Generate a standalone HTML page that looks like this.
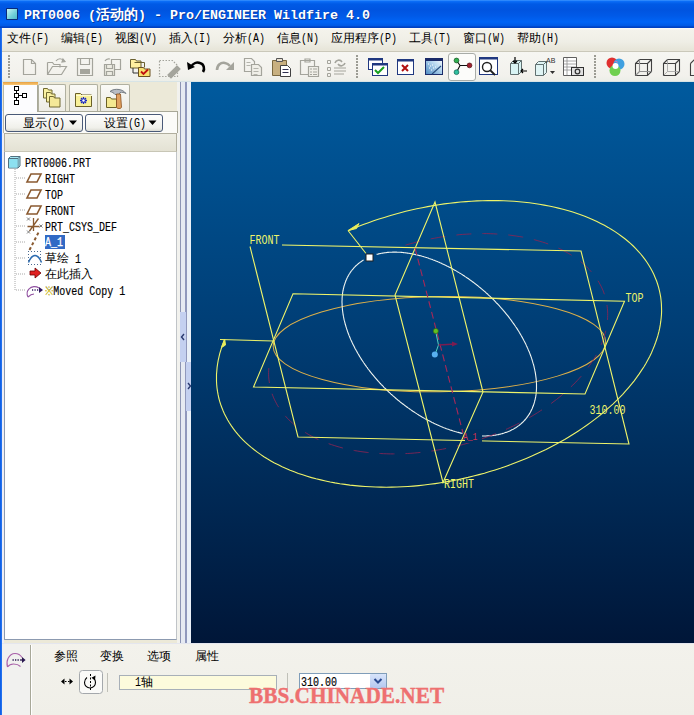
<!DOCTYPE html>
<html><head><meta charset="utf-8">
<style>
*{margin:0;padding:0;box-sizing:border-box}
html,body{width:694px;height:715px;overflow:hidden;background:#ece9d8;font-family:"Liberation Sans",sans-serif;font-size:12px;color:#000}
.a{position:absolute}
.t{position:absolute;white-space:nowrap;line-height:1}
.m{font-family:"Liberation Mono",monospace}
.mi{display:inline-block;font-size:12px;transform:scaleX(.8333);transform-origin:0 0;width:18px}
.tr{font-family:"Liberation Mono",monospace;font-size:12px;transform:scaleX(.8333);transform-origin:0 0;-webkit-text-stroke:.15px #000}
#title{left:0;top:0;width:694px;height:28px;background:linear-gradient(#3d95ff 0px,#0a6cf6 1.5px,#005ae6 4px,#0054e0 10px,#005ae8 16px,#0064f6 22px,#005ae6 25.5px,#0042c4 27px,#0040c0 28px)}
#lborder{left:0;top:28px;width:2px;height:687px;background:linear-gradient(90deg,#0858e0,#2a78f4)}
#menubar{left:2px;top:28px;width:692px;height:24px;background:linear-gradient(#fdfdfb,#f4f3ec 2px,#efeee6 60%,#e8e6da 92%);border-bottom:1px solid #cac8ba}
#toolbar{left:2px;top:52px;width:692px;height:30px;background:linear-gradient(#f6f6f2,#f2f1ec 80%,#eceee8 96%,#c8dce4)}
.menu{top:32px;font-size:12px;letter-spacing:0}
#panel{left:3px;top:82px;width:176px;height:561px;background:#ece9d8}
#viewport{left:191px;top:82px;width:503px;height:561px;background:linear-gradient(#005a9e,#003d74 45%,#001638)}
#dash{left:2px;top:643px;width:692px;height:72px;background:linear-gradient(#f3f2ec,#f0efe8)}
.tab{top:84px;height:27px;background:linear-gradient(#fafaf6,#ecebe4);border:1px solid #b0b0a0;border-bottom:none;border-radius:2px 2px 0 0}
.btn{top:114px;height:18px;background:linear-gradient(#fefefe,#f0f0ea 80%,#dcdcd4);border:1px solid #4a5a78;border-radius:3px}
</style></head><body>
<!-- title -->
<div id="title" class="a">
  <div class="a" style="left:6px;top:8px;width:12px;height:12px;background:#0a2a78;border-radius:1px"></div>
  <div class="a" style="left:7px;top:9px;width:10px;height:10px;background:linear-gradient(135deg,#c8f4f4,#70d0d8 60%,#50b8c8)"></div>
  <div class="t m" style="left:24px;top:7px;font-weight:bold;font-size:13.33px;color:#fff;text-shadow:1px 1px 0 #0a3aa0">PRT0006 (<span style="font-family:'Liberation Sans';font-size:14px;letter-spacing:0">活动的</span>) - Pro/ENGINEER Wildfire 4.0</div>
</div>
<div id="lborder" class="a"></div>
<!-- menu -->
<div id="menubar" class="a"></div>
<div id="toolbar" class="a"></div>
<div class="t menu" style="left:7px">文件<span class="m mi">(F)</span></div>
<div class="t menu" style="left:61px">编辑<span class="m mi">(E)</span></div>
<div class="t menu" style="left:115px">视图<span class="m mi">(V)</span></div>
<div class="t menu" style="left:169px">插入<span class="m mi">(I)</span></div>
<div class="t menu" style="left:223px">分析<span class="m mi">(A)</span></div>
<div class="t menu" style="left:277px">信息<span class="m mi">(N)</span></div>
<div class="t menu" style="left:331px">应用程序<span class="m mi">(P)</span></div>
<div class="t menu" style="left:409px">工具<span class="m mi">(T)</span></div>
<div class="t menu" style="left:463px">窗口<span class="m mi">(W)</span></div>
<div class="t menu" style="left:517px">帮助<span class="m mi">(H)</span></div>
<svg class="a" style="left:0;top:0" width="694" height="82" viewBox="0 0 694 82" shape-rendering="crispEdges">
<g fill="#9c9c94">
<rect x="8" y="55" width="2" height="2"/><rect x="8" y="58" width="2" height="2"/><rect x="8" y="61" width="2" height="2"/><rect x="8" y="64" width="2" height="2"/><rect x="8" y="67" width="2" height="2"/><rect x="8" y="70" width="2" height="2"/><rect x="8" y="73" width="2" height="2"/><rect x="8" y="76" width="2" height="2"/>
<rect x="356" y="55" width="2" height="2"/><rect x="356" y="58" width="2" height="2"/><rect x="356" y="61" width="2" height="2"/><rect x="356" y="64" width="2" height="2"/><rect x="356" y="67" width="2" height="2"/><rect x="356" y="70" width="2" height="2"/><rect x="356" y="73" width="2" height="2"/><rect x="356" y="76" width="2" height="2"/>
<rect x="594" y="55" width="2" height="2"/><rect x="594" y="58" width="2" height="2"/><rect x="594" y="61" width="2" height="2"/><rect x="594" y="64" width="2" height="2"/><rect x="594" y="67" width="2" height="2"/><rect x="594" y="70" width="2" height="2"/><rect x="594" y="73" width="2" height="2"/><rect x="594" y="76" width="2" height="2"/>
</g>
</svg>
<svg class="a" style="left:0;top:0" width="694" height="82" viewBox="0 0 694 82">
<g fill="none" stroke="#a4a49c" stroke-width="1.2">
 <!-- new -->
 <path d="M23.5 59.5h8l4 4v11h-12z"/><path d="M31.5 59.5v4h4"/>
 <!-- open -->
 <path d="M47.5 62.5h5l1.5 2h6v3M47.5 62.5v12h14l5-8h-14l-5 8"/><path d="M56 61c2-3 6-3 8 0" /><path d="M63 59l2 2.5-3 .5z" fill="#a4a49c"/>
 <!-- save -->
 <path d="M77.5 58.5h15v17h-15z"/><path d="M80.5 58.5v6h9v-6"/>
 <!-- saveas -->
 <path d="M111.5 59.5h9v10h-9z"/><path d="M104.5 64.5h10v11h-10z" fill="#ecebe2"/><path d="M106.5 64.5v4h6v-4M106.5 75.5v-4h6v4"/><path d="M105 61c1-2 3-2.5 5-2"/>
 <!-- dashed rect -->
 <path d="M159.5 60.5h13l5 5v11h-18z" stroke-dasharray="1.5 1.5"/><path d="M168 75l9-9 3 3-9 9z" fill="#a4a49c"/>
 <!-- redo -->
 <path d="M217 70c0-5 4-8 8-7 3 .5 5 3 5 3" stroke-width="2.6"/><path d="M234 62v8h-8z" fill="#a4a49c" stroke="none"/>
 <!-- copy -->
 <path d="M244.5 58.5h7l3 3v10h-10z"/><path d="M251.5 64.5h7l3 3v8h-10z" fill="#f0efe8"/><path d="M246.5 62.5h4M246.5 65.5h4M253.5 68.5h5M253.5 71.5h5M253.5 74.5h4" stroke-width=".8"/>
 <!-- paste special -->
 <path d="M300.5 60.5h14v14h-14z"/><path d="M305 59h5v3h-5z"/><path d="M308.5 66.5h10v10h-10z" fill="#f0efe8"/><path d="M310 69h2M313 69h4M310 72h2M313 72h4M310 74.5h2M313 74.5h4" stroke-width="1"/>
 <!-- regen -->
 <path d="M327.5 60.5h3v3h-3zM327.5 67.5h3v3h-3zM327.5 73.5h3v3h-3z" stroke-width="1"/><path d="M334 68h12M334 71h12M334 74h10" stroke-width="1"/><path d="M335 63c1-3 5-4 7-1M345 63c-1 3-5 4-7 1" stroke-width="1.6"/>
</g>
<g fill="#a4a49c"><rect x="80" y="69" width="10" height="5"/></g>
<!-- folders with check -->
<path d="M130.5 59.5h5l1 1.5h4.5v7h-10.5z" fill="#fff0a0" stroke="#6a6030"/><path d="M134.5 62.5h10v5" fill="none" stroke="#6a6030"/>
<path d="M138.5 67.5h5l1 1.5h5.5v7.5h-11.5z" fill="#f8e070" stroke="#6a5020"/><path d="M141 71.5l2.5 2.5 4.5-4.5" fill="none" stroke="#c01010" stroke-width="1.8"/>
<path d="M133 68v5h5" fill="none" stroke="#333"/>
<!-- undo -->
<path d="M191 67c2-4 6-5 9-4 4 1 5 6 3 9" fill="none" stroke="#000" stroke-width="2.6"/><path d="M187 62l1 8 7-3z" fill="#000"/>
<!-- paste -->
<path d="M272.5 60.5h14v15h-14z" fill="#c8b080" stroke="#7a6840"/><path d="M276.5 58.5h6v3h-6z" fill="#e8e0d0" stroke="#555"/><path d="M280.5 65.5h7l3 3v8h-10z" fill="#fff" stroke="#404040"/><path d="M282.5 69.5h6M282.5 72.5h6" stroke="#303050" stroke-width="1"/>
<!-- windows check -->
<rect x="368.5" y="58.5" width="14" height="11" fill="#fff" stroke="#203880"/><rect x="368" y="58" width="15" height="2.5" fill="#203880"/>
<rect x="372.5" y="63.5" width="15" height="12" fill="#fff" stroke="#203880"/><rect x="372" y="63" width="16" height="2.5" fill="#203880"/><path d="M375 70l3 3 6-6" fill="none" stroke="#18a020" stroke-width="2"/>
<!-- x window -->
<rect x="397.5" y="59.5" width="16" height="15" fill="#fff" stroke="#203880"/><rect x="397" y="59" width="17" height="2.5" fill="#203880"/><path d="M402 65l6 6M408 65l-6 6" stroke="#b01010" stroke-width="2"/>
<!-- window gradient -->
<defs><linearGradient id="wg" x1="0" y1="1" x2="1" y2="0"><stop offset="0" stop-color="#4a88c0"/><stop offset=".6" stop-color="#b8d8f0"/><stop offset="1" stop-color="#ffffff"/></linearGradient></defs>
<rect x="425.5" y="58.5" width="17" height="16" fill="url(#wg)" stroke="#1a2a68"/><rect x="425" y="58" width="18" height="3" fill="#1a2a68"/><path d="M428 64h1M430 66h1M429 68h1M432 65h1M433 68h1M431 70h1M435 67h1" stroke="#ffffff" stroke-width="1"/><path d="M432 74l9-8" stroke="#2a5080" stroke-width="1.2"/>
<!-- pressed button -->
<rect x="448.5" y="53.5" width="27" height="27" rx="2.5" fill="#fcfcfa" stroke="#a8aca8"/>
<path d="M456.5 60.5l3.5 5-3.5 6.7M460 65.5h9.5" fill="none" stroke="#101010" stroke-width="1.1"/><circle cx="456.5" cy="60.5" r="2.4" fill="#30b050" stroke="#105020" stroke-width=".7"/><circle cx="456.5" cy="72.2" r="2.4" fill="#30c0a0" stroke="#106050" stroke-width=".7"/><circle cx="469.5" cy="65.4" r="2.4" fill="#a02030" stroke="#501010" stroke-width=".7"/>
<!-- zoom window -->
<rect x="479.5" y="57.5" width="18" height="17" fill="#fff" stroke="#203880"/><rect x="479" y="57" width="19" height="2.5" fill="#203880"/><circle cx="487" cy="67" r="4.5" fill="none" stroke="#202020" stroke-width="1.4"/><path d="M490 70l5 5" stroke="#202020" stroke-width="1.8"/>
<!-- cube arrows -->
<path d="M510.5 63.5l3-3h8v11l-3 3h-8z" fill="#d8f4f4" stroke="#607070"/><path d="M510.5 63.5h8v11M518.5 63.5l3-3" fill="none" stroke="#607070"/><path d="M515 57v6M513 61l2 2 2-2M527 71h-6M523 69l-2 2 2 2" stroke="#000" stroke-width="1.2" fill="none"/>
<!-- AB cube -->
<path d="M535.5 64.5l3-3h8v11l-3 3h-8z" fill="#e0f4f4" stroke="#607070"/><path d="M535.5 64.5h8v11M543.5 64.5l3-3" fill="none" stroke="#607070"/><text x="546" y="63" font-family="Liberation Sans" font-size="7" fill="#303030">AB</text><path d="M550 71h5l-2.5 3z" fill="#303030"/>
<!-- table camera -->
<path d="M563.5 57.5h13v18h-13z" fill="#fff" stroke="#606060"/><path d="M564 61h12M564 64h12M564 67h12M564 70h12M567 58v17" stroke="#909090" stroke-width=".8"/><rect x="571.5" y="67.5" width="12" height="8" fill="#e0e0e0" stroke="#303030"/><circle cx="577.5" cy="71.5" r="2.3" fill="none" stroke="#303030" stroke-width="1.2"/>
<!-- color wheel -->
<circle cx="612" cy="63" r="5.5" fill="#e03030"/><circle cx="619" cy="64" r="5.5" fill="#40a0e0"/><circle cx="615" cy="70.5" r="5.5" fill="#70d050"/><circle cx="615.5" cy="66" r="3" fill="#fff"/><path d="M614 61l3 0 1 2z" fill="#c080c0"/>
<!-- cubes -->
<g fill="none" stroke="#404040" stroke-width="1.1"><path d="M635.5 63.5l4-4h12v12l-4 4h-12zM635.5 63.5h12v12M647.5 63.5l4-4"/><path d="M639.5 59.5v12h12M639.5 71.5l-4 4" stroke="#909090"/>
<path d="M663.5 63.5l4-4h12v12l-4 4h-12zM663.5 63.5h12v12M675.5 63.5l4-4"/><path d="M667.5 59.5v12h12M667.5 71.5l-4 4" stroke="#a0a0a0" stroke-width=".8"/>
<path d="M690.5 63.5l4-4h4M690.5 63.5v12h4"/></g>
</svg>
<div id="panel" class="a"></div>
<div class="a" style="left:2px;top:111px;width:2px;height:532px;background:#eeeef6"></div>
<!-- splitter -->
<div class="a" style="left:177px;top:82px;width:14px;height:561px;background:#f2f2ee"></div>
<div class="a" style="left:180px;top:82px;width:1px;height:561px;background:#8c94b4"></div>
<div class="a" style="left:181px;top:82px;width:4px;height:561px;background:#e6eaf2"></div>
<div class="a" style="left:185px;top:82px;width:2px;height:561px;background:#9098bc"></div>
<div class="a" style="left:187px;top:82px;width:4px;height:561px;background:#eaf0f8"></div>
<div class="a" style="left:180px;top:312px;width:6px;height:50px;background:#c4d0f0"></div>
<div class="a" style="left:186px;top:362px;width:6px;height:49px;background:#c4d0f0"></div>
<svg class="a" style="left:178px;top:330px" width="16" height="64"><path d="M6 4l-2.5 3 2.5 3M10 53l2.5 3-2.5 3" fill="none" stroke="#2a3a70" stroke-width="1.4"/></svg>
<!-- tabs -->
<div class="a" style="left:3px;top:111px;width:175px;height:1px;background:#a8a898"></div>
<div class="a" style="left:3px;top:82px;width:35px;height:30px;background:#fcfcfe;border-left:1px solid #b8b8a8;border-right:1px solid #a8a898"></div>
<div class="a" style="left:3px;top:82px;width:35px;height:3px;background:linear-gradient(#e8a040,#f8c878)"></div>
<div class="a tab" style="left:38px;width:28px"></div>
<div class="a tab" style="left:69px;width:29px"></div>
<div class="a tab" style="left:100px;width:30px"></div>
<svg class="a" style="left:0;top:82px" width="140" height="30">
 <g fill="#fff" stroke="#000" stroke-width="1.1" shape-rendering="crispEdges"><rect x="14.5" y="4.5" width="4" height="4"/><rect x="14.5" y="11.5" width="4" height="4"/><rect x="14.5" y="18.5" width="4" height="4"/><rect x="22.5" y="11.5" width="4" height="4"/></g>
 <path d="M16.5 9v2.5M16.5 16v2.5M19 13.5h3.5" stroke="#000" stroke-width="1"/>
 <g stroke="#706830" stroke-width="1"><path d="M43.5 6.5h4l1 1.5h3.5v8h-8.5z" fill="#f8f0a0"/><path d="M46.5 10.5h4l1 1.5h3.5v8h-8.5z" fill="#f8f0a0"/><path d="M49.5 14.5h4l1 1.5h5.5v9h-10.5z" fill="#f4e898"/></g>
 <path d="M75.5 11.5h5l1.5 1.5h9.5v11.5h-16z" fill="#f8f098" stroke="#6a6028"/><path d="M76 13.5h16" stroke="#fffbd0" stroke-width="1"/><path d="M83.5 15v7M80 18.5h7M81 16l5 5M86 16l-5 5" stroke="#1a28c0" stroke-width="1.3"/><circle cx="83.5" cy="18.5" r="1.2" fill="#fff"/>
 <path d="M106.5 15.5h4l1 1.5h5v8.5h-10z" fill="#f4e890" stroke="#6a6028"/>
 <path d="M110 9.5c2-2 6-2.5 9-2 3 .5 5 1.5 7 4-2-1-4-1.5-6-1l-1 2h-4c-1-1.5-3-2.5-5-3z" fill="#b8bcc4" stroke="#606870" stroke-width=".8"/>
 <path d="M116.5 12h4l1 13c0 1-1 1.5-2.5 1.5s-2.5-.5-2.5-1.5z" fill="#e0a060" stroke="#8a5020" stroke-width=".8"/>
</svg>
<!-- white strip with buttons -->
<div class="a" style="left:3px;top:112px;width:175px;height:21px;background:#fbfbf8;border-left:1px solid #b8b8a8;border-right:1px solid #a8a898"></div>
<div class="a btn" style="left:5px;width:78px"></div>
<div class="a btn" style="left:85px;width:78px"></div>
<div class="t menu" style="left:23px;top:117px">显示<span class="m mi">(O)</span></div>
<div class="t menu" style="left:104px;top:117px">设置<span class="m mi">(G)</span></div>
<svg class="a" style="left:0;top:112px" width="170" height="20"><path d="M69 8.5h8l-4 4.5zM148.5 8.5h8l-4 4.5z" fill="#000"/></svg>
<!-- header bar -->
<div class="a" style="left:4px;top:133px;width:173px;height:19px;background:linear-gradient(#eeede2,#e4e2d4);border:1px solid #b0ae9e;border-bottom:1px solid #c8c6b6"></div>
<!-- tree -->
<div class="a" style="left:4px;top:152px;width:173px;height:488px;background:#fff;border-left:1px solid #8c9ab0;border-right:1px solid #c0c4c8;border-bottom:1px solid #8c9ab0"></div>
<svg class="a" style="left:0;top:150px" width="60" height="150">
 <g fill="#a0a0a0"><path d="M15 19v122" stroke="#a8a8a8" stroke-dasharray="1 1" stroke-width="1"/>
 <path d="M16 28h10M16 44h10M16 60h10M16 76h10M16 92h10M16 108h10M16 124h10M16 140h10" stroke="#a8a8a8" stroke-dasharray="1 1"/></g>
 <!-- part icon -->
 <path d="M8.5 8.5l2-2h9.5v9.5l-2 2h-9.5z" fill="#a8e8f4" stroke="#507080"/><path d="M8.5 8.5h9.5v9.5M18 8.5l2-2" fill="none" stroke="#507080"/><path d="M9 9h8.5v8.5h-8.5z" fill="#8ce0f0"/>
 <!-- datum planes -->
 <g fill="none" stroke="#8a5a30" stroke-width="1.6"><path d="M31 24h10l-4 8h-10z"/><path d="M31 40h10l-4 8h-10z"/><path d="M31 56h10l-4 8h-10z"/></g>
 <!-- csys -->
 <g stroke="#8a5a30" stroke-width="1.3" fill="none"><path d="M27.5 76.5h12M33.5 68v13M29.5 81l9-12.5"/></g><g stroke="#707070" stroke-width=".9" fill="none"><path d="M27 67.5l3 3M30 67.5l-3 3M39.5 74.5l3 3M42.5 74.5l-3 3M27 80.5l3 3M30 80.5l-3 3"/></g>
 <!-- axis -->
 <path d="M29.5 100l9-17.5" stroke="#8a5a30" stroke-width="2" stroke-dasharray="3 2.5"/>
 <!-- sketch -->
 <path d="M28.5 112.5c2-5 4-7 6.5-7s4.5 2 6.5 7" fill="none" stroke="#2a6ab0" stroke-width="1.5"/><g fill="#4a6a90"><rect x="28" y="101" width="1" height="1"/><rect x="31" y="101" width="1" height="1"/><rect x="34" y="101" width="1" height="1"/><rect x="37" y="101" width="1" height="1"/><rect x="40" y="101" width="1" height="1"/><rect x="28" y="114" width="1" height="1"/><rect x="31" y="114" width="1" height="1"/><rect x="34" y="114" width="1" height="1"/><rect x="37" y="114" width="1" height="1"/><rect x="40" y="114" width="1" height="1"/><rect x="28" y="104" width="1" height="1"/><rect x="28" y="107" width="1" height="1"/><rect x="28" y="110" width="1" height="1"/><rect x="40" y="104" width="1" height="1"/><rect x="40" y="107" width="1" height="1"/><rect x="40" y="110" width="1" height="1"/></g>
 <!-- red arrow -->
 <path d="M30 121h5v-3l6 5-6 5v-3h-5z" fill="#e02020" stroke="#700000" stroke-width=".8"/>
 <!-- moved copy -->
 <path d="M28 147c-1.5-3-1-6 1-8 2.5-3 7-3 10-1M28 147c2-2 4-3 6-3" fill="none" stroke="#9050a0" stroke-width="1.1"/><path d="M32 140h1.2M34.5 140h1.2M37 140h1.2" stroke="#301860" stroke-width="1.4"/><path d="M39 137l4 3-4 3z" fill="#301860"/>
</svg>
<div class="a" style="left:45px;top:235px;width:20px;height:14px;background:#316ac5"></div>
<div class="t tr" style="left:25px;top:158px">PRT0006.PRT</div>
<div class="t tr" style="left:45px;top:174px">RIGHT</div>
<div class="t tr" style="left:45px;top:190px">TOP</div>
<div class="t tr" style="left:45px;top:206px">FRONT</div>
<div class="t tr" style="left:45px;top:222px">PRT_CSYS_DEF</div>
<div class="t tr" style="left:45px;top:237px;color:#fff;-webkit-text-stroke:.25px #fff">A_1</div>
<div class="t menu" style="left:45px;top:252px">草绘</div><div class="t tr" style="left:75px;top:254px">1</div>
<div class="t menu" style="left:45px;top:268px">在此插入</div>
<div class="t tr" style="left:45px;top:286px"><span style="color:#e8d000">※</span>Moved Copy 1</div>
<div id="viewport" class="a"></div>
<svg class="a" style="left:191px;top:82px" width="503" height="561" viewBox="191 82 503 561">
<path d="M348.0 230.8 L353.1 228.7 L358.2 226.6 L363.3 224.6 L368.5 222.7 L373.7 220.8 L379.0 219.1 L384.3 217.4 L389.7 215.7 L395.0 214.2 L400.4 212.7 L405.8 211.3 L411.3 210.0 L416.8 208.8 L422.2 207.7 L427.7 206.6 L433.2 205.6 L438.7 204.7 L444.2 203.9 L449.7 203.2 L455.2 202.6 L460.6 202.0 L466.1 201.6 L471.5 201.2 L477.0 200.9 L482.4 200.7 L487.7 200.6 L493.1 200.6 L498.4 200.6 L503.7 200.8 L508.9 201.0 L514.1 201.3 L519.3 201.7 L524.4 202.2 L529.4 202.8 L534.4 203.5 L539.3 204.2 L544.2 205.1 L549.0 206.0 L553.8 207.0 L558.4 208.1 L563.0 209.2 L567.6 210.5 L572.0 211.8 L576.4 213.2 L580.7 214.7 L584.8 216.3 L589.0 218.0 L593.0 219.7 L596.9 221.5 L600.7 223.4 L604.4 225.3 L608.1 227.4 L611.6 229.5 L615.0 231.6 L618.3 233.9 L621.5 236.2 L624.6 238.5 L627.6 241.0 L630.4 243.4 L633.2 246.0 L635.8 248.6 L638.3 251.3 L640.7 254.0 L643.0 256.8 L645.1 259.6 L647.1 262.5 L649.0 265.5 L650.8 268.5 L652.4 271.5 L653.9 274.6 L655.2 277.7 L656.5 280.8 L657.6 284.0 L658.6 287.3 L659.4 290.5 L660.1 293.8 L660.7 297.2 L661.1 300.5 L661.4 303.9 L661.5 307.3 L661.6 310.7 L661.5 314.2 L661.2 317.7 L660.8 321.2 L660.3 324.7 L659.7 328.2 L658.9 331.7 L658.0 335.2 L656.9 338.8 L655.7 342.3 L654.4 345.8 L652.9 349.4 L651.4 352.9 L649.7 356.4 L647.8 359.9 L645.9 363.5 L643.8 367.0 L641.5 370.4 L639.2 373.9 L636.7 377.4 L634.2 380.8 L631.5 384.2 L628.6 387.6 L625.7 390.9 L622.7 394.3 L619.5 397.6 L616.2 400.8 L612.9 404.1 L609.4 407.2 L605.8 410.4 L602.1 413.5 L598.3 416.6 L594.4 419.6 L590.4 422.6 L586.4 425.5 L582.2 428.4 L578.0 431.2 L573.6 434.0 L569.2 436.7 L564.7 439.4 L560.1 442.0 L555.5 444.6 L550.8 447.0 L546.0 449.5 L541.1 451.8 L536.2 454.1 L531.3 456.3 L526.2 458.5 L521.1 460.6 L516.0 462.6 L510.8 464.6 L505.6 466.4 L500.4 468.2 L495.1 469.9 L489.7 471.6 L484.4 473.2 L479.0 474.6 L473.5 476.0 L468.1 477.4 L462.7 478.6 L457.2 479.8 L451.7 480.9 L446.2 481.9 L440.7 482.8 L435.2 483.6 L429.7 484.3 L424.2 485.0 L418.8 485.6 L413.3 486.1 L407.9 486.5 L402.4 486.8 L397.0 487.0 L391.6 487.1 L386.3 487.2 L381.0 487.1 L375.7 487.0 L370.4 486.8 L365.2 486.5 L360.1 486.1 L354.9 485.6 L349.9 485.1 L344.9 484.4 L339.9 483.7 L335.0 482.9 L330.2 482.0 L325.5 481.0 L320.8 479.9 L316.1 478.8 L311.6 477.6 L307.1 476.2 L302.7 474.8 L298.4 473.4 L294.2 471.8 L290.1 470.2 L286.1 468.5 L282.1 466.7 L278.3 464.8 L274.5 462.9 L270.9 460.9 L267.3 458.8 L263.9 456.7 L260.5 454.4 L257.3 452.1 L254.2 449.8 L251.2 447.4 L248.3 444.9 L245.5 442.4 L242.9 439.8 L240.3 437.1 L237.9 434.4 L235.6 431.6 L233.5 428.8 L231.4 425.9 L229.5 423.0 L227.7 420.0 L226.1 417.0 L224.5 413.9 L223.1 410.8 L221.9 407.7 L220.7 404.5 L219.7 401.3 L218.8 398.0 L218.1 394.7 L217.5 391.4 L217.0 388.0 L216.7 384.7 L216.5 381.3 L216.5 377.8 L216.5 374.4 L216.8 370.9 L217.1 367.4 L217.6 363.9 L218.2 360.4 L219.0 356.9 L219.8 353.4 L220.9 349.9 L222.0 346.3 L223.3 342.8 L224.7 339.2" fill="none" stroke="#eef46a" stroke-width="1.1"/>
<ellipse cx="439.42" cy="344.11" rx="166.27" ry="47.61" transform="rotate(179.20 439.42 344.11)" fill="none" stroke="#dcb04a" stroke-width="1"/>
<path d="M462.5 433.4 L461.7 433.3 L460.9 433.1 L460.0 432.9 L459.2 432.6 L458.4 432.4 L457.5 432.2 L456.7 432.0 L455.9 431.7 L455.0 431.5 L454.2 431.2 L453.3 431.0 L452.5 430.7 L451.7 430.4 L450.8 430.2 L450.0 429.9 L449.1 429.6 L448.3 429.3 L447.4 429.0 L446.6 428.7 L445.7 428.4 L444.9 428.0 L444.0 427.7 L443.2 427.4 L442.3 427.0 L441.5 426.7 L440.6 426.3 L439.8 426.0 L438.9 425.6 L438.1 425.2 L437.2 424.8 L436.4 424.4 L435.5 424.1 L434.7 423.7 L433.8 423.3 L433.0 422.8 L432.1 422.4 L431.3 422.0 L430.5 421.6 L429.6 421.1 L428.8 420.7 L427.9 420.3 L427.1 419.8 L426.2 419.3 L425.4 418.9 L424.5 418.4 L423.7 417.9 L422.9 417.5 L422.0 417.0 L421.2 416.5 L420.4 416.0 L419.5 415.5 L418.7 415.0 L417.9 414.4 L417.0 413.9 L416.2 413.4 L415.4 412.9 L414.6 412.3 L413.7 411.8 L412.9 411.3 L412.1 410.7 L411.3 410.1 L410.5 409.6 L409.7 409.0 L408.9 408.4 L408.1 407.9 L407.3 407.3 L406.5 406.7 L405.7 406.1 L404.9 405.5 L404.1 404.9 L403.3 404.3 L402.5 403.7 L401.7 403.1 L400.9 402.5 L400.1 401.9 L399.4 401.2 L398.6 400.6 L397.8 400.0 L397.1 399.3 L396.3 398.7 L395.5 398.0 L394.8 397.4 L394.0 396.7 L393.3 396.1 L393.3 396.1 L392.5 395.4 L391.8 394.7 L391.0 394.1 L390.3 393.4 L389.6 392.7 L388.8 392.0 L388.1 391.3 L387.4 390.6 L386.7 389.9 L386.0 389.2 L385.3 388.5 L384.5 387.8 L383.8 387.1 L383.2 386.4 L382.5 385.7 L381.8 385.0 L381.1 384.3 L380.4 383.5 L379.7 382.8 L379.1 382.1 L378.4 381.4 L377.7 380.6 L377.1 379.9 L376.4 379.1 L375.8 378.4 L375.1 377.6 L374.5 376.9 L373.9 376.1 L373.3 375.4 L372.6 374.6 L372.0 373.9 L371.4 373.1 L370.8 372.4 L370.2 371.6 L369.6 370.8 L369.0 370.0 L368.4 369.3 L367.8 368.5 L367.3 367.7 L366.7 367.0 L366.1 366.2 L365.6 365.4 L365.0 364.6 L364.5 363.8 L363.9 363.0 L363.4 362.3 L362.9 361.5 L362.4 360.7 L361.8 359.9 L361.3 359.1 L360.8 358.3 L360.3 357.5 L359.8 356.7 L359.3 355.9 L358.9 355.1 L358.4 354.3 L357.9 353.5 L357.5 352.7 L357.0 351.9 L356.6 351.1 L356.1 350.3 L355.7 349.5 L355.2 348.7 L354.8 347.9 L354.4 347.1 L354.0 346.3 L353.6 345.5 L353.2 344.7 L352.8 343.9 L352.4 343.1 L352.0 342.3 L351.7 341.5 L351.3 340.7 L350.9 339.9 L350.6 339.1 L350.2 338.3 L349.9 337.5 L349.6 336.7 L349.2 335.9 L348.9 335.1 L348.6 334.3 L348.3 333.5 L348.0 332.7 L347.7 331.9 L347.4 331.1 L347.2 330.3 L346.9 329.5 L346.6 328.7 L346.4 327.9 L346.1 327.1 L345.9 326.3 L345.7 325.5 L345.4 324.8 L345.2 324.0 L345.0 323.2 L344.8 322.4 L344.6 321.6 L344.4 320.9 L344.2 320.1 L344.0 319.3 L343.9 318.5 L343.7 317.8 L343.6 317.0 L343.4 316.2 L343.3 315.5 L343.1 314.7 L343.0 313.9 L342.9 313.2 L342.8 312.4 L342.7 311.7 L342.6 310.9 L342.5 310.2 L342.4 309.4 L342.4 308.7 L342.3 307.9 L342.2 307.2 L342.2 306.5 L342.1 305.7 L342.1 305.0 L342.1 304.3 L342.1 303.6 L342.0 302.8 L342.0 302.1 L342.0 301.4 L342.0 300.7 L342.1 300.0 L342.1 299.3 L342.1 298.6 L342.1 297.9 L342.2 297.2 L342.2 296.5 L342.3 295.8 L342.4 295.1 L342.5 294.5 L342.5 293.8 L342.6 293.1 L342.7 292.5 L342.8 291.8 L342.9 291.1 L343.1 290.5 L343.2 289.8 L343.3 289.2 L343.5 288.5 L343.6 287.9 L343.8 287.3 L343.9 286.6 L344.1 286.0 L344.3 285.4 L344.5 284.8 L344.7 284.2 L344.9 283.6 L345.1 283.0 L345.3 282.4 L345.5 281.8 L345.7 281.2 L346.0 280.6 L346.2 280.0 L346.5 279.4 L346.7 278.9 L347.0 278.3 L347.2 277.7 L347.5 277.2 L347.8 276.6 L348.1 276.1 L348.4 275.6 L348.7 275.0 L349.0 274.5 L349.3 274.0 L349.7 273.5 L350.0 272.9 L350.3 272.4 L350.7 271.9 L351.0 271.4 L351.4 271.0 L351.8 270.5 L352.1 270.0 L352.5 269.5 L352.9 269.1 L353.3 268.6 L353.7 268.1 L354.1 267.7 L354.5 267.2 L354.9 266.8 L355.4 266.4 L355.8 265.9 L356.2 265.5 L356.7 265.1 L357.1 264.7 L357.6 264.3 L358.1 263.9 L358.5 263.5 L359.0 263.1 L359.5 262.7 L360.0 262.4 L360.5 262.0 L361.0 261.7 L361.5 261.3 L362.0 261.0 L362.5 260.6 L363.0 260.3 L363.6 259.9 M376.6 254.4 L377.3 254.2 L377.9 254.1 L378.6 253.9 L379.3 253.8 L379.9 253.6 L380.6 253.5 L381.3 253.3 L382.0 253.2 L382.7 253.1 L383.4 253.0 L384.1 252.9 L384.8 252.8 L385.5 252.7 L386.2 252.6 L386.9 252.5 L387.6 252.4 L388.3 252.4 L389.1 252.3 L389.8 252.3 L390.5 252.2 L391.3 252.2 L392.0 252.2 L392.7 252.1 L393.5 252.1 L394.2 252.1 L395.0 252.1 L395.8 252.1 L396.5 252.1 L397.3 252.2 L398.1 252.2 L398.8 252.2 L399.6 252.3 L400.4 252.3 L401.2 252.4 L401.9 252.4 L402.7 252.5 L403.5 252.6 L404.3 252.7 L405.1 252.8 L405.9 252.9 L406.7 253.0 L407.5 253.1 L408.3 253.2 L409.1 253.3 L409.9 253.5 L410.7 253.6 L411.5 253.7 L412.4 253.9 L413.2 254.1 L414.0 254.2 L414.8 254.4 L415.6 254.6 L416.5 254.8 L417.3 255.0 L418.1 255.2 L418.9 255.4 L419.8 255.6 L420.6 255.8 L421.4 256.0 L422.3 256.3 L423.1 256.5 L424.0 256.8 L424.8 257.0 L425.6 257.3 L426.5 257.5 L427.3 257.8 L428.2 258.1 L429.0 258.4 L429.9 258.7 L430.7 259.0 L431.6 259.3 L432.4 259.6 L433.2 259.9 L434.1 260.2 L434.9 260.6 L435.8 260.9 L436.6 261.3 L437.5 261.6 L438.3 262.0 L439.2 262.3 L440.0 262.7 L440.9 263.1 L441.7 263.5 L442.6 263.9 L443.4 264.3 L444.3 264.7 L445.1 265.1 L446.0 265.5 L446.8 265.9 L447.7 266.3 L448.5 266.8 L449.4 267.2 L450.2 267.6 L451.1 268.1 L451.9 268.5 L452.7 269.0 L453.6 269.5 L454.4 269.9 L455.3 270.4 L456.1 270.9 L456.9 271.4 L457.8 271.9 L458.6 272.4 L459.4 272.9 L460.3 273.4 L461.1 273.9 L461.9 274.4 L462.8 275.0 L463.6 275.5 L464.4 276.0 L465.2 276.6 L466.0 277.1 L466.9 277.7 L467.7 278.2 L468.5 278.8 L469.3 279.4 L470.1 280.0 L470.9 280.5 L471.7 281.1 L472.5 281.7 L473.3 282.3 L474.1 282.9 L474.9 283.5 L475.7 284.1 L476.5 284.7 L477.2 285.3 L478.0 285.9 L478.8 286.6 L479.6 287.2 L480.4 287.8 L481.1 288.5 L481.9 289.1 L482.7 289.8 L483.4 290.4 L484.2 291.1 L484.9 291.7 L485.7 292.4 L486.4 293.1 L487.2 293.7 L487.9 294.4 L488.6 295.1 L489.4 295.8 L490.1 296.4 L490.8 297.1 L491.5 297.8 L492.2 298.5 L492.9 299.2 L493.7 299.9 L494.4 300.6 L495.1 301.3 L495.8 302.1 L496.4 302.8 L497.1 303.5 L497.8 304.2 L498.5 304.9 L499.2 305.7 L499.8 306.4 L500.5 307.1 L501.1 307.9 L501.8 308.6 L502.4 309.4 L503.1 310.1 L503.7 310.8 L504.4 311.6 L505.0 312.3 L505.6 313.1 L506.2 313.9 L506.8 314.6 L507.5 315.4 L508.1 316.1 L508.7 316.9 L509.2 317.7 L509.8 318.5 L510.4 319.2 L511.0 320.0 L511.6 320.8 L512.1 321.6 L512.7 322.3 L513.2 323.1 L513.8 323.9 L514.3 324.7 L514.9 325.5 L515.4 326.3 L515.9 327.0 L516.5 327.8 L517.0 328.6 L517.5 329.4 L518.0 330.2 L518.5 331.0 L519.0 331.8 L519.4 332.6 L519.9 333.4 L520.4 334.2 L520.9 335.0 L521.3 335.8 L521.8 336.6 L522.2 337.4 L522.7 338.2 L523.1 339.0 L523.5 339.8 L523.9 340.6 L524.4 341.4 L524.8 342.2 L525.2 343.0 L525.6 343.8 L526.0 344.6 L526.3 345.4 L526.7 346.2 L527.1 347.0 L527.4 347.8 L527.8 348.6 L528.1 349.4 L528.5 350.2 L528.8 351.0 L529.2 351.8 L529.5 352.6 L529.8 353.4 L530.1 354.2 L530.4 355.0 L530.7 355.8 L531.0 356.6 L531.3 357.4 L531.5 358.2 L531.8 359.0 L532.1 359.8 L532.3 360.6 L532.5 361.4 L532.8 362.2 L533.0 363.0 L533.2 363.7 L533.5 364.5 L533.7 365.3 L533.9 366.1 L534.1 366.9 L534.2 367.6 L534.4 368.4 L534.6 369.2 L534.8 370.0 L534.9 370.7 L535.1 371.5 L535.2 372.3 L535.3 373.0 L535.5 373.8 L535.6 374.6 L535.7 375.3 L535.8 376.1 L535.9 376.8 L536.0 377.6 L536.1 378.3 L536.2 379.1 L536.2 379.8 L536.3 380.5 L536.4 381.3 L536.4 382.0 L536.4 382.7 L536.5 383.5 L536.5 384.2 L536.5 384.9 L536.5 385.6 L536.5 386.3 L536.5 387.1 L536.5 387.8 L536.5 388.5 L536.5 389.2 L536.4 389.9 L536.4 390.6 L536.3 391.3 L536.3 391.9 L536.2 392.6 L536.1 393.3 L536.1 394.0 L536.0 394.7 L535.9 395.3 L535.8 396.0 L535.7 396.7 L535.6 397.3 L535.4 398.0 L535.3 398.6 L535.2 399.3 L535.0 399.9 L534.9 400.5 L534.7 401.2 L534.5 401.8 L534.4 402.4 L534.2 403.0 L534.0 403.6 L533.8 404.3 L533.6 404.9 L533.4 405.5 L533.2 406.1 L532.9 406.6 L532.7 407.2 L532.5 407.8 L532.2 408.4 L532.0 409.0 L531.7 409.5 L531.4 410.1 L531.2 410.6 L530.9 411.2 L530.6 411.7 L530.3 412.3 L530.0 412.8 L529.7 413.4 L529.4 413.9 L529.1 414.4 L528.7 414.9 L528.4 415.4 L528.0 415.9 L527.7 416.4 L527.3 416.9 L527.0 417.4 L526.6 417.9 L526.2 418.4 L525.8 418.8 L525.4 419.3 L525.1 419.8 L524.6 420.2 L524.2 420.7 L523.8 421.1 L523.4 421.5 L523.0 422.0 L522.5 422.4 L522.1 422.8 L521.6 423.2 L521.2 423.6 L520.7 424.0 L520.3 424.4 L519.8 424.8 L519.3 425.2 L518.8 425.6 L518.3 425.9 L517.8 426.3 L517.3 426.6 L516.8 427.0 L516.3 427.3 L515.8 427.7 L515.2 428.0 L514.7 428.3 L514.2 428.6 L513.6 429.0 L513.1 429.3 L512.5 429.6 L512.0 429.8 L511.4 430.1 L510.8 430.4 L510.2 430.7 L509.7 431.0 L509.1 431.2 L508.5 431.5 L507.9 431.7 L507.3 431.9 L506.7 432.2 L506.0 432.4 L505.4 432.6 L504.8 432.8 L504.2 433.0 L503.5 433.2 L502.9 433.4 L502.2 433.6 L501.6 433.8 L500.9 434.0 L500.3 434.1 L499.6 434.3 L499.0 434.4 L498.3 434.6 L497.6 434.7 L496.9 434.8 L496.2 435.0 L495.5 435.1 L494.8 435.2 L494.1 435.3 L493.4 435.4 L492.7 435.5 L492.0 435.6 L491.3 435.6 L490.6 435.7 L489.9 435.8 L489.1 435.8 L488.4 435.9 L487.7 435.9 L486.9 435.9 L486.2 436.0 L485.4 436.0 L484.7 436.0 L483.9 436.0 L483.2 436.0 L482.4 436.0 L481.7 436.0" fill="none" stroke="#eef4f0" stroke-width="1.1"/>
<path d="M268.8 368.1 L268.7 370.3 L268.6 372.6 L268.6 374.8 L268.7 376.9 L268.9 379.1 L269.2 381.3 L269.5 383.4 L269.9 385.5 L270.3 387.7 L270.9 389.7 L271.5 391.8 L272.1 393.9 L272.9 395.9 L273.7 397.9 L274.6 399.9 L275.6 401.8 L276.6 403.8 L277.7 405.7 L278.9 407.5 L280.1 409.4 L281.4 411.2 L282.8 413.0 L284.3 414.8 L285.8 416.5 L287.3 418.2 L289.0 419.9 L290.7 421.5 L292.5 423.1 L294.3 424.7 L296.2 426.2 L298.1 427.7 L300.2 429.2 L302.2 430.6 L304.4 432.0 L306.6 433.3 L308.8 434.7 L311.1 435.9 L313.5 437.2 L315.9 438.4 L318.3 439.5 L320.9 440.6 L323.4 441.7 L326.0 442.7 L328.7 443.7 L331.4 444.6 L334.2 445.5 L337.0 446.4 L339.8 447.2 L342.7 448.0 L345.7 448.7 L348.6 449.3 L351.6 450.0 L354.7 450.6 L357.8 451.1 L360.9 451.6 L364.0 452.0 L367.2 452.4 L370.4 452.8 L373.7 453.1 L377.0 453.3 L380.3 453.5 L383.6 453.7 L386.9 453.8 L390.3 453.9 L393.7 453.9 L397.1 453.9 L400.5 453.8 L404.0 453.7 L407.4 453.5 L410.9 453.3 L414.4 453.0 L417.9 452.7 L421.4 452.3 L424.9 451.9 L428.4 451.5 L431.9 451.0 L435.4 450.4 L438.9 449.8 L442.5 449.2 L446.0 448.5 L449.5 447.8 L453.0 447.0 L456.5 446.2 L460.0 445.3 L463.5 444.4 L467.0 443.4 L470.4 442.4 L473.9 441.4 L477.3 440.3 L480.7 439.2 L484.1 438.0 L487.5 436.8 L490.9 435.6 L494.2 434.3 L497.5 433.0 L500.8 431.6 L504.1 430.2 L507.3 428.8 L510.5 427.3 L513.7 425.8 L516.8 424.3 L519.9 422.7 L523.0 421.1 L526.0 419.5 L529.0 417.8 L532.0 416.1 L534.9 414.3 L537.7 412.6 L540.6 410.7 L543.4 408.9 L546.1 407.1 L548.8 405.2 L551.4 403.3 L554.0 401.3 L556.6 399.4 L559.1 397.4 L561.5 395.4 L563.9 393.3 L566.2 391.3 L568.5 389.2 L570.7 387.1 L572.9 385.0 L575.0 382.9 L577.1 380.7 L579.0 378.6 L581.0 376.4 L582.8 374.2 L584.6 372.0 L586.4 369.8 L588.1 367.5 L589.7 365.3 L591.2 363.0 L592.7 360.8 L594.1 358.5 L595.5 356.3 L596.7 354.0 L598.0 351.7 L599.1 349.4 L600.2 347.1 L601.2 344.8 L602.1 342.6 L603.0 340.3 L603.8 338.0 L604.5 335.7 L605.1 333.4 L605.7 331.1 L606.2 328.9 L606.6 326.6 L607.0 324.3 L607.3 322.1 L607.5 319.9 L607.6 317.6 L607.7 315.4 L607.7 313.2 L607.6 311.0 L607.4 308.8 L607.2 306.7 L606.9 304.5 L606.5 302.4 L606.1 300.3 L605.6 298.2 L605.0 296.1 L604.3 294.1 L603.6 292.0 L602.8 290.0 L601.9 288.0 L601.0 286.1 L599.9 284.1 L598.9 282.2 L597.7 280.3 L596.5 278.5 L595.2 276.7 L593.8 274.9 L592.4 273.1 L590.9 271.4 L589.3 269.6 L587.7 268.0 L586.0 266.3 L584.3 264.7 L582.4 263.1 L580.6 261.6 L578.6 260.1 L576.6 258.6 L574.6 257.2 L572.4 255.8 L570.3 254.4 L568.0 253.1 L565.7 251.8 L563.4 250.6 L561.0 249.4 L558.5 248.2 L556.0 247.1 L553.5 246.0 L550.9 245.0 L548.2 244.0 L545.5 243.0 L542.7 242.1 L539.9 241.3 L537.1 240.5 L534.2 239.7 L531.3 239.0 L528.3 238.3 L525.3 237.6 L522.3 237.0 L519.2 236.5 L516.1 236.0 L513.0 235.6 L509.8 235.1 L506.6 234.8 L503.4 234.5 L500.1 234.2 L496.8 234.0 L493.5 233.8 L490.1 233.7 L486.8 233.6 L483.4 233.6 L480.0 233.6 L476.6 233.7 L473.1 233.8 L469.7 234.0 L466.2 234.2 L462.7 234.4 L459.2 234.7 L455.7 235.1 L452.2 235.5 L448.7 235.9 L445.2 236.4 L441.7 236.9 L438.2 237.5 L434.6 238.2 L431.1 238.8 L427.6 239.5 L424.1 240.3 L420.6 241.1 L417.1 242.0 L413.6 242.9 L410.1 243.8 L406.6 244.8 L403.2 245.8" fill="none" stroke="#8a2454" stroke-width="1" stroke-opacity=".85" stroke-dasharray="15 11"/>
<g fill="none" stroke="#eef46a" stroke-width="1.1">
 <path d="M282 245L581 251L629 444L298 437L250 246.5"/>
 <path d="M293 293.7L624.5 301.3L585 394L253.5 387Z"/>
</g>
<rect x="465" y="429" width="17" height="14" fill="#00305f"/>
<g fill="none" stroke="#eef46a" stroke-width="1.1">
 <path d="M435 202L483 392L443 482.5L395 295Z"/>
 <path d="M220 339.5L274 341"/>
 <path d="M348 230.5L366 253.5"/>
</g>
<path d="M348 230.6L359 223.5L356.5 228.5Z" fill="#e8ec5c" stroke="#e8ec5c" stroke-width="1"/>
<path d="M224.7 339.3L221.5 347.5L225.5 345Z" fill="#e8ec5c" stroke="#e8ec5c" stroke-width="1"/>
<path d="M415 248L463 433" stroke="#a82858" stroke-width="1.1" stroke-dasharray="7 4"/>
<rect x="366" y="254" width="7" height="7" fill="#fff" stroke="#202020" stroke-width="1"/>
<path d="M436 333L438.5 345L435 354.5" fill="none" stroke="#50d0c0" stroke-width="1"/>
<path d="M438.5 345L456 344" stroke="#7c1c50" stroke-width="1.3"/><path d="M458 344l-6-2.5v5z" fill="#7c1c50"/>
<circle cx="435.8" cy="331" r="2.6" fill="#60c020" stroke="#306010" stroke-width=".6"/>
<circle cx="434.8" cy="354.6" r="3" fill="#58b0f0"/>
<g font-family="Liberation Mono" font-size="12.5" fill="#eef46a">
<text transform="translate(249.5 243.8) scale(.8 1)">FRONT</text>
<text transform="translate(625.5 301.8) scale(.8 1)">TOP</text>
<text transform="translate(444 487.8) scale(.8 1)">RIGHT</text>
<text transform="translate(589.5 413.8) scale(.8 1)">310.00</text>
</g>
<text transform="translate(463 439.5) scale(.8 1)" font-family="Liberation Mono" font-size="10" fill="#d83050">A_1</text>
</svg>
<div id="dash" class="a"></div>
<div class="a" style="left:2px;top:643px;width:692px;height:1px;background:#e4e6ee"></div>
<div class="a" style="left:2px;top:644px;width:28px;height:71px;background:#f1f1ef"></div>
<div class="a" style="left:30px;top:645px;width:1px;height:70px;background:#a8a898"></div>
<div class="a" style="left:31px;top:645px;width:1px;height:70px;background:#fff"></div>
<svg class="a" style="left:0;top:645px" width="32" height="30"><path d="M7.5 22c-.8-3-.8-6 .5-8.5 1.5-3 4-5 7-5 3.5 0 5.5 1.5 7 4M7.5 22c1.5-2 3.5-3 6-3 2.5 0 5 .5 7 2.5" fill="none" stroke="#a860a8" stroke-width="1.1"/><path d="M12.5 15h1.3M15 15h1.3M17.5 15h1.3" stroke="#2a1850" stroke-width="1.5"/><path d="M20 15h3" stroke="#2a1850" stroke-width="1.3"/><path d="M22 12l3.6 3-3.6 3z" fill="#2a1850"/></svg>
<div class="t menu" style="left:54px;top:650px">参照</div>
<div class="t menu" style="left:100px;top:650px">变换</div>
<div class="t menu" style="left:147px;top:650px">选项</div>
<div class="t menu" style="left:195px;top:650px">属性</div>
<svg class="a" style="left:55px;top:670px" width="60" height="26"><path d="M7 11.5h10" stroke="#000" stroke-width="1.1" stroke-dasharray="1.5 1.5"/><path d="M6 11.5l3.5-3v6zM18 11.5l-3.5-3v6z" fill="#000"/>
<rect x="24.5" y="0.5" width="23" height="23" rx="3" fill="#fafaf8" stroke="#a4a8ac"/>
<path d="M32 7.5c-2 1.5-2.5 3.5-2.5 5 0 3 2.5 5.5 5.5 5.5s5.5-2.5 5.5-5.5c0-1.5-.5-3-1.5-4.2" fill="none" stroke="#000" stroke-width="1.1"/><path d="M40.5 5.5l-.5 5-3.5-2.8z" fill="#000"/><path d="M35.5 4v2M35.5 7.5v2M35.5 11v2M35.5 14.5v2M35.5 18v2" stroke="#000" stroke-width="1"/>
<rect x="52" y="3" width="1" height="19" fill="#c0c0b8"/></svg>
<div class="a" style="left:119px;top:675px;width:158px;height:15px;background:#fdfbdc;border:1px solid #a8b0b8"></div>
<div class="t menu" style="left:135px;top:676px"><span class="m mi" style="width:6px">1</span>轴</div>
<div class="a" style="left:287px;top:673px;width:1px;height:19px;background:#c0c0b8"></div>
<div class="a" style="left:299px;top:673px;width:88px;height:16px;background:#fff;border:1px solid #7f9db9"></div>
<div class="t tr" style="left:301px;top:677px">310.00</div>
<div class="a" style="left:370px;top:674px;width:16px;height:14px;background:linear-gradient(#d8e4fa,#b4c8f0);border-radius:1px"></div>
<svg class="a" style="left:370px;top:674px" width="16" height="14"><path d="M4.5 5l3.5 3.5 3.5-3.5" fill="none" stroke="#2a4a90" stroke-width="2"/></svg>
<div class="t" style="left:249px;top:684px;font-family:'Liberation Serif',serif;font-weight:bold;font-size:23px;color:#ee7070;transform:scaleX(.925);transform-origin:0 0;-webkit-text-stroke:.4px #ee7070">BBS.CHINADE.NET</div>
</body></html>
